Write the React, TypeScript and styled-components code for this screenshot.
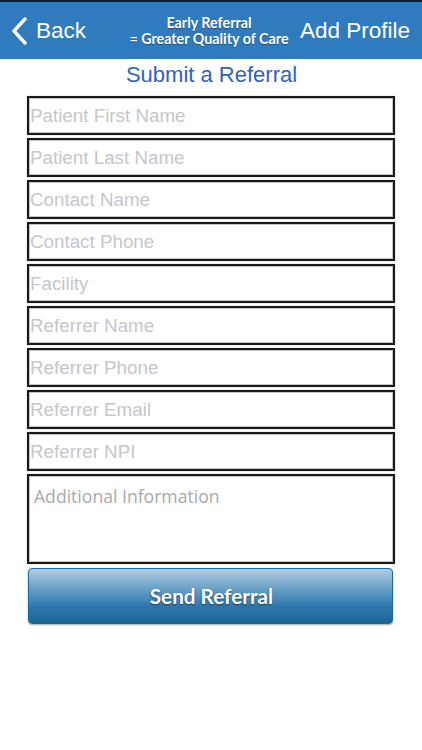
import React from "react";
import styled, { createGlobalStyle } from "styled-components";

const Global = createGlobalStyle`
  html, body { margin: 0; padding: 0; background: #fff; }
  body { font-family: "Liberation Sans", Arial, sans-serif; }
  * { box-sizing: border-box; }
`;

const Page = styled.div`
  width: 422px;
  height: 750px;
  background: #fff;
  display: flex;
  flex-direction: column;
`;

const Header = styled.header`
  height: 59px;
  background: #2f7bbd;
  border-top: 2px solid #0e2238;
  display: flex;
  align-items: center;
  justify-content: space-between;
  padding: 0 12px 0 11px;
  color: #fff;
`;

const BackButton = styled.div`
  display: flex;
  align-items: center;
  gap: 8px;
  font-size: 22.5px;
  font-family: "Liberation Sans", Arial, sans-serif;
`;

const Tagline = styled.div`
  font-family: Lato, "Open Sans", sans-serif;
  font-weight: 700;
  font-size: 14.3px;
  line-height: 16px;
  text-align: center;
  text-shadow: 0 1px 1px rgba(0, 0, 0, 0.35);
  margin-left: 32px;
  margin-right: 0;
  margin-top: 1px;
`;

const RightAction = styled.div`
  font-size: 22.5px;
  font-family: "Liberation Sans", Arial, sans-serif;
`;

const Title = styled.h1`
  margin: 2px 0 0;
  height: 35px;
  font-size: 22px;
  font-weight: 400;
  color: #2f62c6;
  text-align: center;
  line-height: 28px;
  font-family: "Liberation Sans", Arial, sans-serif;
  padding-left: 1px;
`;

const Form = styled.div`
  display: flex;
  flex-direction: column;
  gap: 3px;
  padding: 0 27px;
`;

const Field = styled.div<{ $tall?: boolean }>`
  height: ${(p) => (p.$tall ? "90px" : "39px")};
  border: 2px solid #1a1a1a;
  box-shadow: 0 0 0 1px #c4c4c4 inset, 0 0 1px #999;
  display: flex;
  align-items: ${(p) => (p.$tall ? "flex-start" : "center")};
  padding: ${(p) => (p.$tall ? "8px 5px" : "0 1px")};
  font-size: 18.8px;
  color: #c6c6cb;
  font-family: ${(p) =>
    p.$tall ? `"Open Sans", sans-serif` : `"Liberation Sans", Arial, sans-serif`};
  ${(p) => (p.$tall ? "color: #a9a9a9; font-size: 17.6px;" : "")}
`;

const SendButton = styled.button`
  margin: 1px 2px 0 1px;
  height: 56px;
  border: 1px solid #1a6a9c;
  border-radius: 4px;
  background: linear-gradient(
    to bottom,
    #b2cde1 0%,
    #8ab4d2 20%,
    #4f90bf 50%,
    #2b77ad 70%,
    #1c6597 100%
  );
  box-shadow: 0 1px 2px rgba(0, 0, 0, 0.35);
  color: #fff;
  font-family: Lato, "Open Sans", sans-serif;
  font-weight: 700;
  font-size: 20.7px;
  text-shadow: 0 1px 2px rgba(0, 0, 0, 0.55);
  display: flex;
  align-items: center;
  justify-content: center;
  padding: 0 0 0 2px;
`;

const Chevron = () => (
  <svg width="17" height="28" viewBox="0 0 17 28">
    <path d="M14 2 L3 14 L14 26" stroke="#fff" strokeWidth="3.4" fill="none" strokeLinecap="round" strokeLinejoin="round" />
  </svg>
);

const fields = [
  "Patient First Name",
  "Patient Last Name",
  "Contact Name",
  "Contact Phone",
  "Facility",
  "Referrer Name",
  "Referrer Phone",
  "Referrer Email",
  "Referrer NPI",
];

export default function App() {
  return (
    <>
      <Global />
      <Page>
        <Header>
          <BackButton>
            <Chevron />
            Back
          </BackButton>
          <Tagline>
            Early Referral
            <br />= Greater Quality of Care
          </Tagline>
          <RightAction>Add Profile</RightAction>
        </Header>
        <Title>Submit a Referral</Title>
        <Form>
          {fields.map((f) => (
            <Field key={f}>{f}</Field>
          ))}
          <Field $tall>Additional Information</Field>
          <SendButton>Send Referral</SendButton>
        </Form>
      </Page>
    </>
  );
}
